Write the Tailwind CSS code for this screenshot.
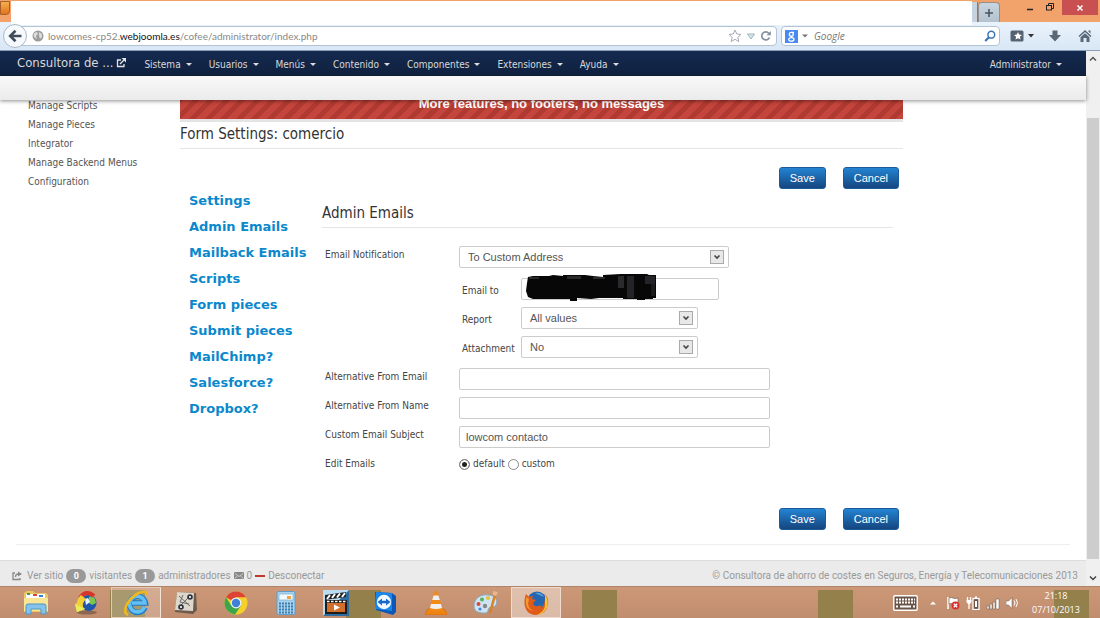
<!DOCTYPE html>
<html lang="es">

<head>
  <meta charset="UTF-8">
  <meta name="viewport" content="width=device-width, initial-scale=1.0">
  <title>Form Settings: comercio</title>
  <script src="https://cdn.jsdelivr.net/npm/@tailwindcss/browser@4"></script>
</head>

<body class="h-screen flex flex-col overflow-hidden bg-white text-[10px] leading-4 text-[#444] font-['DejaVu_Sans_Condensed','Noto_Sans',sans-serif]">

  <!-- Title bar -->
  <div class="flex h-[22px] shrink-0 bg-[#f2a26b]">
    <div class="w-[11px] pt-px"><div class="h-3.5 w-2.5 rounded-br-sm border border-[#a8602a] bg-linear-to-b from-[#f3b04e] to-[#e3701c]"></div></div>
    <div class="relative z-10 mt-px h-6 flex-1 bg-white"></div>
    <div class="mt-0.5 w-1.5 border-r border-[#8a7a70] bg-[#c5d3df]"></div>
    <button aria-label="Nueva pestaña" class="mt-0.5 flex w-[22px] items-center justify-center rounded-t-sm border border-b-0 border-[#9a8f88] bg-linear-to-b from-[#c9d5e0] to-[#b3c2cf]">
      <svg class="size-2.5" viewBox="0 0 10 10"><path d="M5 1v8M1 5h8" stroke="#4b5663" stroke-width="1.6" /></svg>
    </button>
    <div class="flex w-[62px] items-start justify-end gap-2.5 pr-[7px] pt-0.5">
      <button aria-label="Minimizar"><svg class="size-2.5" viewBox="0 0 10 10"><path d="M2 7.5h6" stroke="#222" stroke-width="1.5" /></svg></button>
      <button aria-label="Restaurar"><svg class="size-2.5" viewBox="0 0 10 10" fill="none" stroke="#222"><path d="M3.5 3V1.5h5v5H7" /><rect x="1.5" y="3.5" width="5" height="4.5" /></svg></button>
    </div>
    <button aria-label="Cerrar" class="mr-0.5 flex h-[15px] w-9 items-center justify-center bg-[#c85051]">
      <svg class="size-2" viewBox="0 0 8 8"><path d="M1.5 1.5l5 5M6.5 1.5l-5 5" stroke="#fff" stroke-width="1.5" /></svg>
    </button>
  </div>

  <!-- Address bar -->
  <div class="flex h-[29px] shrink-0 items-center border-b border-[#8b9db3] bg-linear-to-b from-[#eaf3fc] to-[#d8e7f6] pl-[3px] pr-2">
    <button aria-label="Atrás" class="relative z-10 -mr-3 flex size-6 shrink-0 items-center justify-center rounded-full border border-[#a9b7c6] bg-[#f6fafd]">
      <svg class="size-4" viewBox="0 0 16 16" fill="none" stroke="#414d5b" stroke-width="2.6"><path d="M8.5 2.8L3.2 8l5.3 5.2M3.5 8H14.500" /></svg>
    </button>
    <div class="flex h-5 flex-1 items-center rounded-r-sm border border-[#b4c3d3] bg-white pl-4 pr-1">
      <svg class="size-3" viewBox="0 0 12 12"><circle cx="6" cy="6" r="5.500" fill="#9b9b9b" /><path d="M2 3l3-1 1 2-2 2 1 3-2-1-1.500-2zM7 2l3 2v3L8 9 7 6z" fill="#dcdcdc" /></svg>
      <a href="#" class="ml-1 flex-1 font-['Lato',sans-serif] text-[#888]">lowcomes-cp52.<b class="font-normal text-[#111]">webjoomla.es</b>/cofee/administrator/index.php</a>
      <svg class="size-3.5" viewBox="0 0 14 14"><path d="M7 1l1.800 4 4.200.4-3.200 2.900 1 4.300L7 10.300l-3.800 2.300 1-4.300L1 5.400 5.200 5z" fill="#fff" stroke="#aab" /></svg>
      <svg class="ml-1 size-2.5" viewBox="0 0 10 10"><path d="M1.500 3h7L5 8z" fill="#d5e4ea" stroke="#a3b5bd" /></svg>
      <svg class="ml-1 size-3" viewBox="0 0 12 12"><path d="M9.500 7.500A4 4 0 1 1 8.800 3.200" fill="none" stroke="#84909c" stroke-width="1.700" /><path d="M6.500 5.200h4.300V1z" fill="#84909c" /></svg>
    </div>
    <div class="ml-1 flex h-5 w-[219px] items-center rounded-sm border border-[#b4c3d3] bg-white px-[3px]">
      <span class="flex size-[13px] items-center justify-center bg-[#4a89f0]">
        <svg class="size-[11px]" viewBox="0 0 11 11" fill="none" stroke="#fff" stroke-width="1.300"><ellipse cx="5.300" cy="3.200" rx="2" ry="1.900" /><ellipse cx="5.300" cy="8.400" rx="2.600" ry="1.700" /><path d="M5.500 1.300H8M5.500 5.100v1.600" /></svg>
      </span>
      <svg class="ml-1 size-1.5" viewBox="0 0 6 6"><path d="M0 1.500h6L3 4.500z" fill="#777" /></svg>
      <input aria-label="Buscar" placeholder="Google" class="ml-1.5 w-0 flex-1 font-['Open_Sans',sans-serif] italic outline-none placeholder:text-[#777]">
      <svg class="size-3" viewBox="0 0 12 12" fill="none" stroke="#3b76b5"><circle cx="7.300" cy="4.700" r="3.400" stroke-width="1.500" /><path d="M5 7.200L1.200 11" stroke-width="2.200" /></svg>
    </div>
    <div class="ml-2.5 flex items-center">
      <svg class="size-[14px]" viewBox="0 0 14 14"><rect x=".5" y="1.500" width="13" height="11" rx="1.500" fill="#556270" /><path d="M8 3l1.200 2.600 2.800.3-2.100 1.900.6 2.800L8 9.200l-2.500 1.400.6-2.800L4 5.900l2.800-.3z" fill="#fff" /></svg>
      <svg class="ml-1 size-1.5" viewBox="0 0 6 6"><path d="M0 1h6L3 4.500z" fill="#333" /></svg>
      <svg class="ml-3.5 size-3.5" viewBox="0 0 14 14"><path d="M4.500 1.500h5V6H13l-6 6.500L1 6h3.500z" fill="#5a6878" /></svg>
      <svg class="ml-4 size-3.5" viewBox="0 0 14 14"><path d="M7 1l6.500 6-1 1L7 3 1.500 8l-1-1zM10.500 1.500h2v3l-2-1.800zM7 4.200l4.500 4V13H8.500V9h-3v4h-3V8.200z" fill="#5a6878" /></svg>
    </div>
  </div>

  <div class="flex min-h-0 flex-1">
    <div class="flex min-w-0 flex-1 flex-col">

      <!-- Joomla menu -->
      <nav class="relative z-20 flex h-[25px] shrink-0 items-center border-b border-[#0d1b33] bg-linear-to-b from-[#142a50] to-[#10213f] pb-px pl-[17px] pr-6 pt-1 text-[#d9d9d9]">
        <a href="#" class="-mt-1 mr-[18px] flex items-center text-[13px]">Consultora de ...
          <svg class="ml-[3px] size-2.5" viewBox="0 0 10 10" fill="none" stroke="#e4e4e4" stroke-width="1.300"><path d="M5 2H1.500v6.500H8V6M4 6l4-4" /><path d="M5.500 0H10v4.500z" fill="#e4e4e4" stroke="none" /></svg>
        </a>
        <div class="flex gap-[17px]">
          <a href="#" class="flex items-center gap-[5px]">Sistema <svg class="h-[3px] w-1.5" viewBox="0 0 6 3"><path d="M0 0h6L3 3z" fill="#ddd" /></svg></a>
          <a href="#" class="flex items-center gap-[5px]">Usuarios <svg class="h-[3px] w-1.5" viewBox="0 0 6 3"><path d="M0 0h6L3 3z" fill="#ddd" /></svg></a>
          <a href="#" class="flex items-center gap-[5px]">Menús <svg class="h-[3px] w-1.5" viewBox="0 0 6 3"><path d="M0 0h6L3 3z" fill="#ddd" /></svg></a>
          <a href="#" class="flex items-center gap-[5px]">Contenido <svg class="h-[3px] w-1.5" viewBox="0 0 6 3"><path d="M0 0h6L3 3z" fill="#ddd" /></svg></a>
          <a href="#" class="flex items-center gap-[5px]">Componentes <svg class="h-[3px] w-1.5" viewBox="0 0 6 3"><path d="M0 0h6L3 3z" fill="#ddd" /></svg></a>
          <a href="#" class="flex items-center gap-[5px]">Extensiones <svg class="h-[3px] w-1.5" viewBox="0 0 6 3"><path d="M0 0h6L3 3z" fill="#ddd" /></svg></a>
          <a href="#" class="flex items-center gap-[5px]">Ayuda <svg class="h-[3px] w-1.5" viewBox="0 0 6 3"><path d="M0 0h6L3 3z" fill="#ddd" /></svg></a>
        </div>
        <a href="#" class="ml-auto flex items-center gap-[5px]">Administrator <svg class="h-[3px] w-1.5" viewBox="0 0 6 3"><path d="M0 0h6L3 3z" fill="#ddd" /></svg></a>
      </nav>
      <div class="relative z-10 h-6 shrink-0 bg-linear-to-b from-[#f9f9f9] to-[#ebebeb] shadow-[0_1px_4px_rgba(0,0,0,0.45)]"></div>

      <!-- Content, scrolled a little under the subheader -->
      <div class="-mt-3 flex min-h-0 flex-1 flex-col overflow-hidden">
        <div class="flex">
          <ul class="w-[180px] shrink-0 pl-7 pt-2 leading-[19px] text-[#555]">
            <li><a href="#">Manage Scripts</a></li>
            <li><a href="#">Manage Pieces</a></li>
            <li><a href="#">Integrator</a></li>
            <li><a href="#">Manage Backend Menus</a></li>
            <li><a href="#">Configuration</a></li>
          </ul>

          <main class="mr-[183px] flex-1">
            <div class="h-[34px] border-b-[3px] border-[#e4e4e4] bg-[repeating-linear-gradient(135deg,#c4453b_0_6px,#b03a32_6px_11px)] text-center font-['Liberation_Sans',sans-serif] text-[13px] font-bold leading-[32px] text-white">More features, no footers, no messages</div>
            <h1 class="h-[27px] border-b border-[#e5e5e5] text-[15px] leading-[25px] text-[#333]">Form Settings: comercio</h1>

            <div class="mt-[18px] flex justify-end gap-[17px] pr-1 font-['Liberation_Sans',sans-serif] text-[11px] text-white">
              <button class="h-[22px] rounded-[3px] border border-[#1c5a99] bg-linear-to-b from-[#2384d3] to-[#15467f] px-2.5">Save</button>
              <button class="h-[22px] rounded-[3px] border border-[#1c5a99] bg-linear-to-b from-[#2384d3] to-[#15467f] px-2.5">Cancel</button>
            </div>

            <div class="flex pr-2.5">
              <ul class="-mt-px w-[142px] shrink-0 whitespace-nowrap pl-[9px] font-['DejaVu_Sans',sans-serif] text-[13px] font-bold leading-[26px] text-[#0a88cc]">
                <li><a href="#">Settings</a></li>
                <li><a href="#">Admin Emails</a></li>
                <li><a href="#">Mailback Emails</a></li>
                <li><a href="#">Scripts</a></li>
                <li><a href="#">Form pieces</a></li>
                <li><a href="#">Submit pieces</a></li>
                <li><a href="#">MailChimp?</a></li>
                <li><a href="#">Salesforce?</a></li>
                <li><a href="#">Dropbox?</a></li>
              </ul>

              <form class="flex-1 pt-3">
                <h2 class="h-[27px] border-b border-[#e5e5e5] text-[15px] leading-[25px] text-[#333]">Admin Emails</h2>
                <div class="mt-[18px] grid grid-cols-[134px_1fr] gap-y-[7px] pl-[3px] leading-[18px]">
                  <label for="notify">Email Notification</label>
                  <div>
                    <div class="relative w-[270px]">
                      <select id="notify" class="block h-[22px] w-full appearance-none rounded-[2px] border border-[#ccc] bg-white px-2 font-['Liberation_Sans',sans-serif] text-[11px] text-[#555]"><option>To Custom Address</option></select>
                      <svg class="pointer-events-none absolute right-[5px] top-1 size-3.5" viewBox="0 0 14 14"><rect x=".5" y=".5" width="13" height="13" fill="#e8e8e8" stroke="#aaa" /><path d="M4.500 5.500L7 8l2.500-2.500" fill="none" stroke="#444" stroke-width="1.600" /></svg>
                    </div>
                    <div class="mb-[3px] mt-2.5 grid grid-cols-[59px_1fr] items-end gap-y-[7px] pl-[3px]">
                      <label for="mailto">Email to</label>
                      <div class="relative w-[198px]">
                        <input id="mailto" type="text" class="block h-[22px] w-full rounded-[2px] border border-[#ccc] px-1.5">
                        <svg class="pointer-events-none absolute -top-1 left-1 h-7 w-[134px]" viewBox="0 0 134 28"><path d="M3 3L8 2l16 0 4-1 10 1V1h22l8 1 10 1V1l18-1h26l2 1h7v23h-3v1h-8v1h-8v-1H98v-1H74l-8 1-14-1v3h-7v-2H8l-5-2-2-6 1-8z" fill="#070707" /><path d="M4 3h10v2H4zM42 2h14v3H42zM68 3h12v2H68zM93 2h6v12h-6z" fill="#2a2a2c" /><path d="M102 2h7v22h-7zM120 2h10v8h-10z" fill="#242428" /><path d="M126 10h4v12h-4z" fill="#1b1b1e" /></svg>
                      </div>
                      <label for="report">Report</label>
                      <div class="relative w-[177px]">
                        <select id="report" class="block h-[22px] w-full appearance-none rounded-[2px] border border-[#ccc] bg-white px-2 font-['Liberation_Sans',sans-serif] text-[11px] text-[#555]"><option>All values</option></select>
                        <svg class="pointer-events-none absolute right-[5px] top-1 size-3.5" viewBox="0 0 14 14"><rect x=".5" y=".5" width="13" height="13" fill="#e8e8e8" stroke="#aaa" /><path d="M4.500 5.500L7 8l2.500-2.500" fill="none" stroke="#444" stroke-width="1.600" /></svg>
                      </div>
                      <label for="attach">Attachment</label>
                      <div class="relative w-[177px]">
                        <select id="attach" class="block h-[22px] w-full appearance-none rounded-[2px] border border-[#ccc] bg-white px-2 font-['Liberation_Sans',sans-serif] text-[11px] text-[#555]"><option>No</option></select>
                        <svg class="pointer-events-none absolute right-[5px] top-1 size-3.5" viewBox="0 0 14 14"><rect x=".5" y=".5" width="13" height="13" fill="#e8e8e8" stroke="#aaa" /><path d="M4.500 5.500L7 8l2.500-2.500" fill="none" stroke="#444" stroke-width="1.600" /></svg>
                      </div>
                    </div>
                  </div>
                  <label for="altmail">Alternative From Email</label>
                  <input id="altmail" type="text" class="h-[22px] w-[311px] rounded-[2px] border border-[#ccc] px-1.5">
                  <label for="altname">Alternative From Name</label>
                  <input id="altname" type="text" class="h-[22px] w-[311px] rounded-[2px] border border-[#ccc] px-1.5">
                  <label for="subject">Custom Email Subject</label>
                  <input id="subject" type="text" value="lowcom contacto" class="h-[22px] w-[311px] rounded-[2px] border border-[#ccc] px-1.5 font-['Liberation_Sans',sans-serif] text-[11px] text-[#555]">
                  <span>Edit Emails</span>
                  <div class="flex items-center gap-[3px]">
                    <input id="ed-default" name="edit" type="radio" checked class="size-[11px] appearance-none rounded-full border border-[#888] bg-white checked:bg-[#222] checked:shadow-[inset_0_0_0_2px_#fff]">
                    <label for="ed-default">default</label>
                    <input id="ed-custom" name="edit" type="radio" class="size-[11px] appearance-none rounded-full border border-[#888] bg-white checked:bg-[#222] checked:shadow-[inset_0_0_0_2px_#fff]">
                    <label for="ed-custom">custom</label>
                  </div>
                </div>
              </form>
            </div>

            <div class="mt-[35px] flex justify-end gap-[17px] pr-1 font-['Liberation_Sans',sans-serif] text-[11px] text-white">
              <button class="h-[22px] rounded-[3px] border border-[#1c5a99] bg-linear-to-b from-[#2384d3] to-[#15467f] px-2.5">Save</button>
              <button class="h-[22px] rounded-[3px] border border-[#1c5a99] bg-linear-to-b from-[#2384d3] to-[#15467f] px-2.5">Cancel</button>
            </div>
          </main>
        </div>
        <hr class="ml-4 mr-4 mt-3.5 border-[#eee]">
      </div>

      <!-- Status bar -->
      <footer class="flex h-[26px] shrink-0 items-center border-t border-[#ddd] bg-[#ebebeb] pl-3 pr-2 pt-1 font-['Roboto',sans-serif] text-[#999]">
        <svg class="mr-[5px] size-2.5" viewBox="0 0 10 10" fill="none" stroke="#888" stroke-width="1.300"><path d="M3 2H1v6.500h7V7M3.500 6c0-2 1-3 3-3" /><path d="M6 .5L10 3 6 5.500z" fill="#888" stroke="none" /></svg>
        <a href="#">Ver sitio</a>
        <span class="mx-[3px] flex h-3.5 w-5 items-center justify-center rounded-full bg-[#999] text-[9px] font-bold text-white">0</span>
        visitantes
        <span class="mx-[3px] flex h-3.5 w-5 items-center justify-center rounded-full bg-[#999] text-[9px] font-bold text-white">1</span>
        administradores
        <svg class="mx-[3px] h-[7px] w-2.5" viewBox="0 0 10 7"><rect width="10" height="7" rx="1" fill="#888" /><path d="M1 1.500L5 4.500l4-3M1 6l2.500-2M9 6L6.500 4" fill="none" stroke="#ddd" stroke-width=".8" /></svg>
        0
        <span class="mx-[3px] h-0.5 w-2.5 bg-[#c0392f]"></span>
        <a href="#">Desconectar</a>
        <span class="ml-auto">© Consultora de ahorro de costes en Seguros, Energía y Telecomunicaciones 2013</span>
      </footer>
    </div>

    <!-- Scrollbar -->
    <div class="flex w-3.5 shrink-0 flex-col items-center bg-[#f0f0f0]">
      <svg class="my-1 size-2" viewBox="0 0 8 8"><path d="M1 5.500l3-3 3 3" fill="none" stroke="#555" stroke-width="1.500" /></svg>
      <div class="mb-[27px] mt-[51px] w-3 flex-1 bg-[#cdcdcd]"></div>
      <svg class="-mt-3 mb-1 size-2" viewBox="0 0 8 8"><path d="M1 2.500l3 3 3-3" fill="none" stroke="#444" stroke-width="1.500" /></svg>
    </div>
  </div>

  <!-- Taskbar -->
  <div class="relative flex h-8 shrink-0 items-stretch border-t border-[#b08468] bg-linear-to-b from-[#cc9877] to-[#c08d6f] pl-[11px] pr-4">
    <div class="absolute inset-x-0 bottom-0 top-[3px] bg-[repeating-linear-gradient(90deg,transparent_0_110px,#93804a_110px_145px,transparent_145px_236px)]"></div>
    <div class="relative grid grid-cols-[repeat(11,50px)]">
      <button aria-label="Explorador" class="flex items-center justify-center">
        <svg class="size-[26px]" viewBox="0 0 26 26"><path d="M1 3l3-2h6l2 2h11l2 2v17H1z" fill="#e9c863" /><path d="M3 4h19v4H3z" fill="#fff" /><path d="M4 3h3v2H4z" fill="#3a9b4b" /><path d="M10 4h4v2h-4z" fill="#d34a3a" /><path d="M16 5h4v2h-4z" fill="#3a7fd0" /><path d="M1 8h24v13H1z" fill="#f8e596" /><path d="M3 16q0-2 2-2h16q2 0 2 2v8h-5v-5H8v5H3z" fill="#83c3ec" stroke="#4f97c8" /></svg>
      </button>
      <button aria-label="Descargas" class="flex items-center justify-center">
        <svg class="size-6" viewBox="0 0 24 24"><ellipse cx="13" cy="21.500" rx="10" ry="2" fill="#8d6750" /><circle cx="14.500" cy="12" r="8" fill="#1f57ad" /><path d="M15 6q4-2 6 2l1 4-4 2-4-3z" fill="#7cc64e" /><path d="M11 8l3-1 2 4-4 3z" fill="#e8f2fa" /><path d="M20 5Q12-2 6 7" fill="none" stroke="#d9362b" stroke-width="4" /><path d="M7 4q-4 4-4 8l-2 1 2 8 8-3-2-2q-1-4 3-8z" fill="#f3cf34" /><path d="M1 13l2 8 8-3z" fill="#e6ef5a" /></svg>
      </button>
      <button aria-label="Internet Explorer" class="flex items-center justify-center border border-[#e6c9b5] border-r-[#f3e4da] bg-white/20">
        <svg class="size-7" viewBox="0 0 28 28"><path d="M23 18.500A8 8 0 1 1 23.500 14H10" fill="none" stroke="#1f78c6" stroke-width="5.400" /><path d="M22.500 18A7.800 7.800 0 1 1 23 14H10" fill="none" stroke="#62c0f2" stroke-width="3.600" /><path d="M6 26C-1 23 6 10 15 5q9-5 10 1" fill="none" stroke="#f2b71e" stroke-width="2.600" /></svg>
      </button>
      <button aria-label="Editor" class="flex items-center justify-center">
        <svg class="size-6" viewBox="0 0 24 24"><path d="M3 1l19 1 1 17-4 4L1 21z" fill="#6c5a4c" /><path d="M3 1l17 1-1 18L1 19z" fill="#ded7cc" /><path d="M5 5l11 10M15 6L6 15M9 4l-3 7 9 2" fill="none" stroke="#6a6a6a" /><circle cx="16" cy="6" r="2.800" fill="#30343c" /><circle cx="7" cy="16" r="2.800" fill="#30343c" /><path d="M15 5h2v2h-2zM6 15h2v2H6z" fill="#cfd6dc" /></svg>
      </button>
      <button aria-label="Chrome" class="flex items-center justify-center">
        <svg class="size-6" viewBox="0 0 24 24"><circle cx="12" cy="12" r="11.500" fill="#f5cf2a" /><path d="M12 12L2 6.300A11.500 11.500 0 0 1 22 6.300H12z" fill="#dd4335" /><path d="M2 6.300A11.500 11.500 0 0 0 11 23.500L17 14.500 7 14z" fill="#3da64c" /><circle cx="12" cy="12" r="5.400" fill="#f4f4f4" /><circle cx="12" cy="12" r="4.200" fill="#3d82d8" /></svg>
      </button>
      <button aria-label="Calculadora" class="flex items-center justify-center">
        <svg class="h-6 w-5" viewBox="0 0 20 24"><rect x="1" y=".5" width="18" height="23" rx="1.500" fill="#a9d2ee" stroke="#5f9cc7" /><rect x="3" y="3" width="14" height="6" fill="#f1f9fe" stroke="#6ba5cc" stroke-width=".6" /><path d="M11 5h4v3h-4z" fill="#f0a63c" /><path d="M3 12.500h14M3 15.500h14M3 18.500h14M3 21.500h14" stroke="#3d7cae" stroke-width="1.800" stroke-dasharray="2 1" /></svg>
      </button>
      <button aria-label="Películas" class="flex items-center justify-center">
        <svg class="size-[26px]" viewBox="0 0 26 26"><rect width="26" height="26" fill="#b9dcf2" /><path d="M26 0v26H0z" fill="#2e6ca0" /><path d="M2 5l21-3v5L2 10z" fill="#222" /><path d="M4 9l3-4M9 8l3-4M14 7.500l3-4M19 7l3-4" stroke="#fff" stroke-width="2" /><rect x="2" y="10" width="22" height="14" fill="#1d1d1d" /><rect x="4" y="13" width="18" height="9" fill="#d36f2b" /><path d="M11 14.500v6l6-3z" fill="#fff" /><path d="M4 11.500h19" stroke="#fff" stroke-width="1.500" stroke-dasharray="2.500 1.500" /></svg>
      </button>
      <button aria-label="TeamViewer" class="flex items-center justify-center">
        <svg class="size-6" viewBox="0 0 24 24"><path d="M1 1l17 1 4 3v16l-3 3L2 19z" fill="#0b58b8" /><path d="M2 1l16 1v18L2 18z" fill="#1a86ea" /><circle cx="10" cy="11" r="7.200" fill="#f2f8fe" /><path d="M3.500 11L8 7.500v2.300h4V7.500l4.500 3.500-4.500 3.500v-2.300H8v2.300z" fill="#1769cc" /></svg>
      </button>
      <button aria-label="VLC" class="flex items-center justify-center">
        <svg class="h-6 w-[22px]" viewBox="0 0 22 24"><path d="M3 18h16l3 4v2H0v-2z" fill="#ef8312" stroke="#c96308" stroke-width=".6" /><path d="M9.800 0h2.400L18 19q-7 3-14 0z" fill="#f28a17" /><path d="M8.600 4.500h4.800l1.400 4.500H7.200zM6 13h10l1 4q-6 2-12 0z" fill="#f0f0f0" /></svg>
      </button>
      <button aria-label="Paint" class="flex items-center justify-center">
        <svg class="size-[26px]" viewBox="0 0 26 26"><path d="M1 16C1 8 8 4 15 5c8 0 10 6 8 10-2 3-5 1-7 3-2 3 0 5-5 5C5 23 1 21 1 16z" fill="#cfe4f2" stroke="#86a9c2" /><circle cx="9" cy="9.500" r="2" fill="#58b158" /><circle cx="15" cy="8" r="2" fill="#eac33a" /><circle cx="5.500" cy="14" r="2" fill="#d64a38" /><circle cx="12" cy="16" r="2.200" fill="#888" /><circle cx="7" cy="19" r="1.600" fill="#4a86cf" /><path d="M22 5l-5 18" stroke="#d98228" stroke-width="2.600" /><path d="M20 1l5 1-2 4-3-1z" fill="#e8b88a" /></svg>
      </button>
      <button aria-label="Firefox" class="flex items-center justify-center border border-[#efdccd] bg-white/40">
        <svg class="size-[26px]" viewBox="0 0 26 26"><circle cx="14" cy="11" r="9.500" fill="#2467b0" /><path d="M12 3q6-1 9 4-5-2-9-4z" fill="#5ba2dd" /><path d="M3 4l3 3 4-1-1 3 4 1-3 3q1 4 5 3 2-1 4 0-2 4-6 3 8 1 9-10 1-3-1-5 5 3 4 10-2 11-12 11C3 25-1 15 3 4z" fill="#e05a1a" /><path d="M22 5q4 5 2 12-3 7-10 8 8-4 8-10z" fill="#f8c72e" /><path d="M3 7l3 2-1 5q1 6 7 7-8 0-9-7z" fill="#f19a35" /></svg>
      </button>
    </div>
    <div class="relative ml-auto flex items-center text-white">
      <svg class="h-4 w-[25px]" viewBox="0 0 25 16"><rect x=".8" y=".8" width="23.400" height="14.400" rx="1" fill="#6b5547" stroke="#fff" stroke-width="1.400" /><path d="M3 4.500h19M3 7.500h19" stroke="#fff" stroke-width="2" stroke-dasharray="2 1" /><path d="M3 11.500h2M7 11.500h11M20 11.500h2" stroke="#fff" stroke-width="2" /></svg>
      <svg class="ml-3 size-1.5" viewBox="0 0 6 6"><path d="M0 4.500h6L3 1.500z" fill="#fff" /></svg>
      <svg class="ml-2.5 size-3.5" viewBox="0 0 14 14"><path d="M2 1v12" stroke="#fff" stroke-width="1.500" /><path d="M3 2q3-1 4 0t5 0v6q-3 1-5 0T3 8z" fill="#fff" stroke="#6b5547" stroke-width=".6" /><circle cx="9.500" cy="9.500" r="4" fill="#d92f2f" /><path d="M7.800 7.800l3.400 3.400M11.200 7.800l-3.400 3.400" stroke="#fff" stroke-width="1.300" /></svg>
      <svg class="ml-1.5 size-3.5" viewBox="0 0 14 14" fill="none" stroke="#fff"><path d="M1.500 1v3M4.500 1v3M3 7v6" stroke-width="1.300" /><path d="M.5 4h5v2L4 8H2L.5 6z" fill="#fff" stroke="none" /><rect x="7" y="2.500" width="6" height="11" stroke-width="1.300" fill="#6b5547" /><path d="M9 1.500h2M10 5v6" stroke-width="2" /></svg>
      <svg class="ml-1.5 size-3.5" viewBox="0 0 14 14"><path d="M1 10h2v3H1zM4 8h2v5H4zM7 6h2v7H7zM10 3h3v10h-3z" fill="#fff" stroke="#6b5547" stroke-width=".5" /></svg>
      <svg class="ml-1.5 size-3.5" viewBox="0 0 14 14"><path d="M0 5h2.500L6 1.500v11L2.500 9H0z" fill="#fff" stroke="#6b5547" stroke-width=".5" /><path d="M8 4.500q2 2.500 0 5M10 3q3 4 0 8" fill="none" stroke="#fff" /></svg>
      <div class="ml-2 w-14 text-center font-['Open_Sans',sans-serif] text-[9px] leading-[14px]">21:18<br>07/10/2013</div>
    </div>
  </div>

</body>

</html>
